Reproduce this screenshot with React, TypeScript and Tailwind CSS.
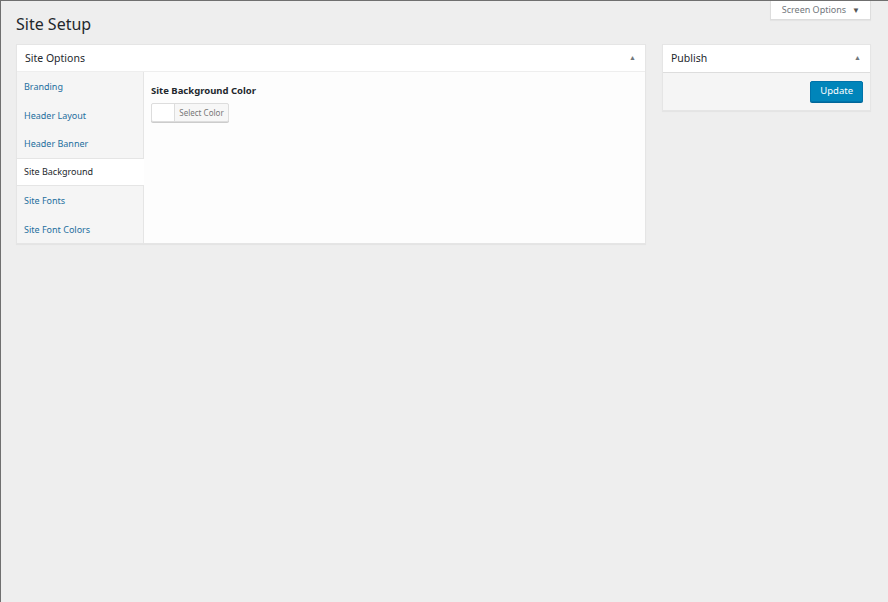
import React from "react";

const navItems = [
  "Branding",
  "Header Layout",
  "Header Banner",
  "Site Background",
  "Site Fonts",
  "Site Font Colors",
];

export default function App() {
  const active = "Site Background";
  return (
    <div
      className="w-[888px] h-[602px] bg-[#eeeeee] border-l border-t border-[#6f6f6f] overflow-hidden text-[#444444]"
      style={{ fontFamily: '"Noto Sans", "Open Sans", sans-serif' }}
    >
      <div className="flex items-start justify-between pl-[15px] pr-[17px]">
        <h1 className="pt-[12px] text-[16px] leading-[22px] text-[#23282d]">Site Setup</h1>
        <div className="flex items-center gap-[6px] h-[19px] pl-[11px] pr-[10px] bg-white border border-t-0 border-[#dddddd] shadow-[0_1px_1px_rgba(0,0,0,0.04)] text-[9px] text-[#72777c]">
          <span>Screen Options</span>
          <span className="text-[8px] text-[#555]">▼</span>
        </div>
      </div>

      <div className="flex items-start gap-[16px] pl-[15px] mt-[9px]">
        {/* Site Options panel */}
        <div className="w-[630px] bg-white border border-[#e5e5e5] shadow-[0_1px_1px_rgba(0,0,0,0.04)]">
          <div className="flex items-center justify-between h-[27px] pt-px pl-[8px] pr-[9px] border-b border-[#eeeeee]">
            <span className="text-[10.5px] text-[#23282d]">Site Options</span>
            <span className="text-[7px] text-[#72777c]">▲</span>
          </div>
          <div className="flex">
            <div className="w-[127px] bg-[#f5f5f5] border-r border-[#e5e5e5] flex flex-col">
              {navItems.map((item) =>
                item === active ? (
                  <div
                    key={item}
                    className="-mr-px h-[28.5px] flex items-center pl-[7px] bg-white border-y border-[#e5e5e5] text-[9px] text-[#23282d]"
                  >
                    {item}
                  </div>
                ) : (
                  <div
                    key={item}
                    className="h-[28.5px] pt-px flex items-center pl-[7px] text-[9px] text-[#1e6f9e]"
                  >
                    {item}
                  </div>
                )
              )}
            </div>
            <div className="flex-1 bg-[#fdfdfd] pl-[7px] pt-[12px]">
              <div className="text-[9.5px] font-bold text-[#23282d]">Site Background Color</div>
              <div className="mt-[5px] flex h-[19px] w-[78px] border border-[#dddddd] rounded-[2px] bg-[#f7f7f7] shadow-[0_1px_0_#cccccc]">
                <div className="w-[23px] bg-white border-r border-[#dddddd] rounded-l-[2px]" />
                <div className="flex-1 flex items-center justify-center text-[8px] text-[#777777]">Select Color</div>
              </div>
            </div>
          </div>
        </div>

        {/* Publish panel */}
        <div className="w-[209px] bg-white border border-[#e5e5e5] shadow-[0_1px_1px_rgba(0,0,0,0.04)]">
          <div className="flex items-center justify-between h-[28px] pl-[8px] pr-[9px] border-b border-[#dddddd]">
            <span className="text-[10.5px] text-[#23282d]">Publish</span>
            <span className="text-[7px] text-[#72777c]">▲</span>
          </div>
          <div className="flex justify-end items-center h-[37px] px-[7px] bg-[#f5f5f5]">
            <button className="h-[21px] px-[9px] bg-[#0085ba] border border-[#0073aa] rounded-[2px] text-white text-[9.5px] shadow-[0_1px_0_#006799]">
              Update
            </button>
          </div>
        </div>
      </div>
    </div>
  );
}
